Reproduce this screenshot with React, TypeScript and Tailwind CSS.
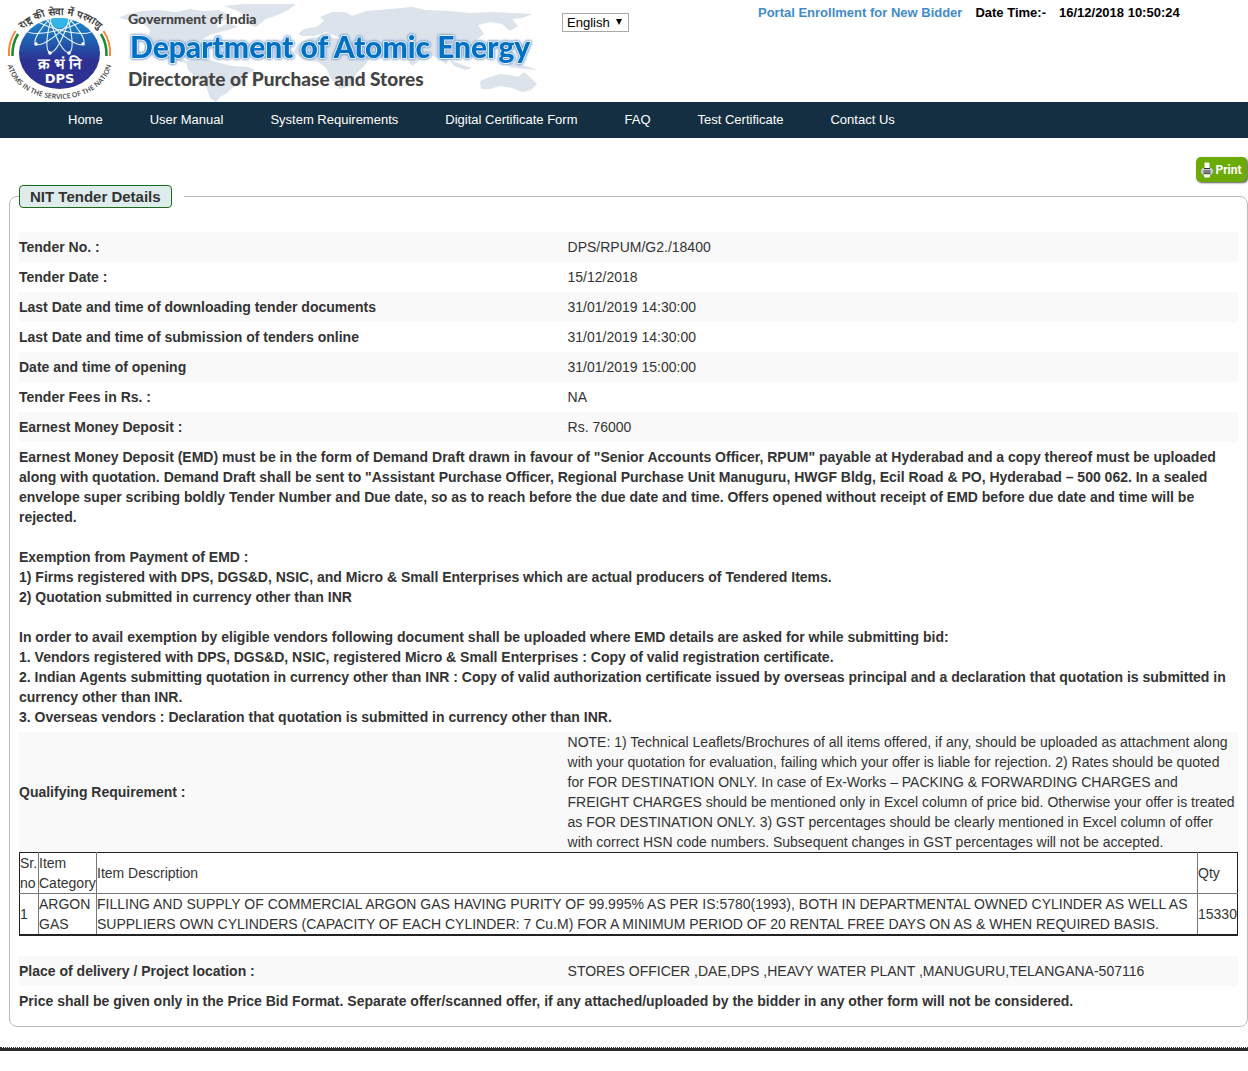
import type { ReactNode } from 'react'

const navItems = [
  'Home',
  'User Manual',
  'System Requirements',
  'Digital Certificate Form',
  'FAQ',
  'Test Certificate',
  'Contact Us',
]

const details = [
  { label: 'Tender No. :', value: 'DPS/RPUM/G2./18400' },
  { label: 'Tender Date :', value: '15/12/2018' },
  { label: 'Last Date and time of downloading tender documents', value: '31/01/2019 14:30:00' },
  { label: 'Last Date and time of submission of tenders online', value: '31/01/2019 14:30:00' },
  { label: 'Date and time of opening', value: '31/01/2019 15:00:00' },
  { label: 'Tender Fees in Rs. :', value: 'NA' },
  { label: 'Earnest Money Deposit :', value: 'Rs. 76000' },
]

const items = [
  {
    no: 1,
    category: 'ARGON GAS',
    description:
      'FILLING AND SUPPLY OF COMMERCIAL ARGON GAS HAVING PURITY OF 99.995% AS PER IS:5780(1993), BOTH IN DEPARTMENTAL OWNED CYLINDER AS WELL AS SUPPLIERS OWN CYLINDERS (CAPACITY OF EACH CYLINDER: 7 Cu.M) FOR A MINIMUM PERIOD OF 20 RENTAL FREE DAYS ON AS & WHEN REQUIRED BASIS.',
    qty: 15330,
  },
]

function Emblem() {
  return (
    <svg width="120" height="102" viewBox="0 0 120 102" role="img" aria-label="DPS emblem">
      <defs>
        <linearGradient id="disc" x1="0" y1="0" x2="0" y2="1">
          <stop offset="0" stopColor="#1a86cc" />
          <stop offset="0.3" stopColor="#1f62b4" />
          <stop offset="0.6" stopColor="#2d3192" />
          <stop offset="1" stopColor="#2d3192" />
        </linearGradient>
        <clipPath id="discClip">
          <ellipse cx="59.5" cy="53.5" rx="40.5" ry="35.5" />
        </clipPath>
        <path id="topArc" d="M19 33 A56 56 0 0 1 102 33" />
        <path id="bottomArc" d="M7 59 A52.5 40 0 0 0 112 59" />
      </defs>
      <ellipse cx="59.5" cy="53.5" rx="40.5" ry="35.5" fill="url(#disc)" />
      <g clipPath="url(#discClip)" fill="none" stroke="#e6f4fc" strokeWidth="1.1">
        <ellipse cx="59.5" cy="21" rx="8.5" ry="33" transform="rotate(17 59.5 21)" />
        <ellipse cx="59.5" cy="21" rx="8.5" ry="33" transform="rotate(-17 59.5 21)" />
        <ellipse cx="59.5" cy="21" rx="8.5" ry="33" transform="rotate(46 59.5 21)" />
        <ellipse cx="59.5" cy="21" rx="8.5" ry="33" transform="rotate(-46 59.5 21)" />
        <ellipse cx="59.5" cy="21" rx="8.5" ry="34" transform="rotate(74 59.5 21)" />
        <ellipse cx="59.5" cy="21" rx="8.5" ry="34" transform="rotate(-74 59.5 21)" />
        <circle cx="59.5" cy="20" r="8.5" fill="#35b4ea" stroke="none" />
      </g>
      <g fill="#fff">
        <circle cx="50" cy="53" r="1.8" />
        <circle cx="69" cy="53" r="1.8" />
        <circle cx="36" cy="44" r="1.8" />
        <circle cx="83" cy="44" r="1.8" />
      </g>
      <g fill="none">
        <path d="M15.5 31 Q8 42 9 56" stroke="#f58a3c" strokeWidth="2" />
        <path d="M18 34 Q12 44 12.5 56" stroke="#1a8a34" strokeWidth="2.5" />
        <path d="M103.5 31 Q111 42 110 56" stroke="#f58a3c" strokeWidth="2" />
        <path d="M101 34 Q107 44 106.5 56" stroke="#1a8a34" strokeWidth="2.5" />
      </g>
      <text x="59.5" y="69" textAnchor="middle" fontSize="15" fontWeight="700" fill="#fff">
        क्र भं नि
      </text>
      <text x="59.5" y="83" textAnchor="middle" fontSize="13" fontWeight="700" fill="#fff" className="font-['DejaVu_Sans',sans-serif]">
        DPS
      </text>
      <text fontSize="10" fontWeight="600" fill="#444">
        <textPath href="#topArc" startOffset="50%" textAnchor="middle">राष्ट्र की सेवा में परमाणु</textPath>
      </text>
      <text fontSize="7" fontWeight="600" fill="#444" className="font-['Open_Sans',sans-serif]">
        <textPath href="#bottomArc" startOffset="50%" textAnchor="middle">ATOMS IN THE SERVICE OF THE NATION</textPath>
      </text>
    </svg>
  )
}

function Banner() {
  return (
    <svg width="430" height="102" viewBox="0 0 430 102" className="font-['Lato',sans-serif]">
      {/* world map */}
      <g fill="#dde3eb">
        <path d="M0 17 L8 14 L22 11 L38 10 L56 12 L70 9 L84 11 L98 10 L110 15 L106 20 L96 22 L98 28 L108 23 L118 27 L104 31 L92 34 L84 38 L76 44 L72 50 L62 49 L58 54 L64 60 L70 63 L60 62 L50 56 L40 52 L34 44 L28 38 L30 30 L22 22 L8 20 L0 18 Z" />
        <path d="M104 6 L122 4 L146 4 L176 4 L168 10 L158 15 L146 19 L136 27 L128 24 L126 16 L118 11 Z" />
        <path d="M66 62 L76 59 L90 60 L100 63 L112 66 L128 67 L135 70 L126 76 L122 84 L112 88 L106 94 L100 97 L96 102 L90 98 L86 86 L76 78 L68 70 Z" />
        <path d="M178 44 L190 38 L206 36 L222 40 L238 42 L246 52 L252 56 L244 66 L236 74 L230 86 L220 89 L212 80 L206 68 L198 62 L184 60 L174 52 Z" />
        <path d="M178 34 L184 29 L196 27 L204 21 L200 17 L212 12 L226 12 L232 16 L246 11 L270 9 L292 7 L306 10 L330 11 L350 13 L372 12 L396 13 L413 14 L402 18 L392 19 L398 26 L390 31 L382 24 L370 22 L358 25 L364 34 L354 42 L346 44 L350 52 L340 58 L332 54 L326 64 L318 58 L308 54 L300 60 L292 66 L284 54 L270 50 L262 58 L250 56 L240 44 L228 40 L216 36 L206 32 L194 36 L182 36 Z" />
        <path d="M330 60 L340 64 L352 68 L346 70 L334 66 Z" />
        <path d="M384 62 L400 64 L418 70 L404 69 L390 67 Z" />
        <path d="M360 81 L370 77 L380 74 L390 75 L398 77 L404 72 L412 79 L417 84 L411 90 L402 92 L392 88 L380 86 L370 89 L361 89 Z" />
      </g>
      <text x="8" y="24" fontSize="14" fontWeight="900" fill="#444">
        Government of India
      </text>
      <text
        x="10"
        y="58"
        fontSize="30"
        fontWeight="900"
        fill="#0070c4"
        stroke="#e4f0fb"
        strokeWidth="2"
        strokeLinejoin="round"
        paintOrder="stroke"
        className="[filter:drop-shadow(0_0_1px_#5f8ccc)_drop-shadow(0_0_1px_#8fb0dc)]"
      >
        Department of Atomic Energy
      </text>
      <text x="8" y="86" fontSize="19" fontWeight="900" fill="#444">
        Directorate of Purchase and Stores
      </text>
    </svg>
  )
}

function PrinterIcon() {
  return (
    <svg width="12" height="16" viewBox="0 0 12 16">
      <path d="M3.500 0.500h4l1 1V6h-5z" fill="#fff" />
      <path d="M1.500 6h9l1.500 2v3l-1.500 1.500h-9L0 11V8z" fill="#c4ccd1" />
      <path d="M3 6.500h6M2.500 9h7M2.500 11.200h7" stroke="#333" strokeWidth="1.200" />
      <path d="M2.500 12.500h7l-1 3h-5z" fill="#fff" />
    </svg>
  )
}

function LanguageSelect() {
  return (
    <div className="relative mt-[13px] ml-3">
      <select
        aria-label="Language"
        className="block h-[19px] w-[67px] appearance-none border border-[#a9a9a9] bg-white pl-1 text-[13px] leading-4 text-black"
      >
        <option>English</option>
      </select>
      <svg width="6" height="6" viewBox="0 0 6 6" className="pointer-events-none absolute top-[6px] right-[7px]">
        <path d="M0 0h6L3 6z" fill="#000" />
      </svg>
    </div>
  )
}

function DetailRow({ label, shaded, children }: { label: string; shaded: boolean; children: ReactNode }) {
  return (
    <div className={`flex items-center ${shaded ? 'bg-[#f9f9f9]' : ''}`}>
      <dt className="w-[45%] shrink-0 font-bold">{label}</dt>
      <dd className="w-[55%]">{children}</dd>
    </div>
  )
}

export default function App() {
  return (
    <div className="bg-white font-['Liberation_Sans',Arial,sans-serif] text-sm leading-5 text-[#333]">
      <header className="flex items-start">
        <Emblem />
        <Banner />
        <LanguageSelect />
        <div className="mt-[3px] ml-[129px] flex gap-[13px] text-[13px] font-bold whitespace-nowrap text-black">
          <a href="#enroll" className="text-[#428bca]">
            Portal Enrollment for New Bidder
          </a>
          <span>Date Time:-</span>
          <time>16/12/2018 10:50:24</time>
        </div>
      </header>

      <nav className="flex h-9 items-center gap-[47px] bg-[#152f42] px-[68px] text-[13px] text-white">
        {navItems.map((item) => (
          <a key={item} href="#">
            {item}
          </a>
        ))}
      </nav>

      <main>
        <div className="flex justify-end pt-[19px] pr-px">
          <button
            type="button"
            className="flex h-[25px] w-[51px] items-center justify-center gap-[2px] rounded-[5px] bg-[#6aab05] font-['Roboto',sans-serif] text-xs font-bold text-white shadow-[1px_1px_2px_#555]"
          >
            <PrinterIcon />
            Print
          </button>
        </div>

        <fieldset className="mt-[3px] ml-[9px] rounded-lg border border-[#bbb] px-[9px] pb-[10px]">
          <legend className="pr-3">
            <span className="block rounded border border-[#1c6b1c] bg-[#deecec] px-[10px] text-[15px] leading-[21px] font-bold">
              NIT Tender Details
            </span>
          </legend>

          <dl className="mt-6">
            {details.map((d, i) => (
              <DetailRow key={d.label} label={d.label} shaded={i % 2 === 0}>
                <div className="py-[5px]">{d.value}</div>
              </DetailRow>
            ))}
          </dl>

          <div className="space-y-5 py-[5px] font-bold">
            <p>
              Earnest Money Deposit (EMD) must be in the form of Demand Draft drawn in favour of "Senior Accounts
              Officer, RPUM" payable at Hyderabad and a copy thereof must be uploaded along with quotation. Demand Draft
              shall be sent to "Assistant Purchase Officer, Regional Purchase Unit Manuguru, HWGF Bldg, Ecil Road & PO,
              Hyderabad – 500 062. In a sealed envelope super scribing boldly Tender Number and Due date, so as to reach
              before the due date and time. Offers opened without receipt of EMD before due date and time will be
              rejected.
            </p>
            <p>
              Exemption from Payment of EMD :<br />
              1) Firms registered with DPS, DGS&D, NSIC, and Micro & Small Enterprises which are actual producers of
              Tendered Items.
              <br />
              2) Quotation submitted in currency other than INR
            </p>
            <p>
              In order to avail exemption by eligible vendors following document shall be uploaded where EMD details are
              asked for while submitting bid:
              <br />
              1. Vendors registered with DPS, DGS&D, NSIC, registered Micro & Small Enterprises : Copy of valid
              registration certificate.
              <br />
              2. Indian Agents submitting quotation in currency other than INR : Copy of valid authorization certificate
              issued by overseas principal and a declaration that quotation is submitted in currency other than INR.
              <br />
              3. Overseas vendors : Declaration that quotation is submitted in currency other than INR.
            </p>
          </div>

          <dl>
            <DetailRow label="Qualifying Requirement :" shaded>
              NOTE: 1) Technical Leaflets/Brochures of all items offered, if any, should be uploaded as attachment along
              with your quotation for evaluation, failing which your offer is liable for rejection. 2) Rates should be
              quoted for FOR DESTINATION ONLY. In case of Ex-Works – PACKING & FORWARDING CHARGES and FREIGHT CHARGES
              should be mentioned only in Excel column of price bid. Otherwise your offer is treated as FOR DESTINATION
              ONLY. 3) GST percentages should be clearly mentioned in Excel column of offer with correct HSN code
              numbers. Subsequent changes in GST percentages will not be accepted.
            </DetailRow>
          </dl>

          <table className="w-full border-collapse border border-b-2 border-[#222] text-left">
            <thead>
              <tr className="border-b border-[#777]">
                <th className="w-[19px] border-r border-[#777] font-normal">Sr. no</th>
                <th className="w-[58px] border-r border-[#777] font-normal">Item Category</th>
                <th className="border-r border-[#777] font-normal">Item Description</th>
                <th className="w-10 font-normal">Qty</th>
              </tr>
            </thead>
            <tbody>
              {items.map((item) => (
                <tr key={item.no}>
                  <td className="border-r border-[#777]">{item.no}</td>
                  <td className="border-r border-[#777]">{item.category}</td>
                  <td className="border-r border-[#777]">{item.description}</td>
                  <td>{item.qty}</td>
                </tr>
              ))}
            </tbody>
          </table>

          <dl className="mt-5">
            <DetailRow label="Place of delivery / Project location :" shaded>
              <div className="py-[5px]">STORES OFFICER ,DAE,DPS ,HEAVY WATER PLANT ,MANUGURU,TELANGANA-507116</div>
            </DetailRow>
          </dl>
          <p className="py-[5px] font-bold">
            Price shall be given only in the Price Bid Format. Separate offer/scanned offer, if any attached/uploaded by
            the bidder in any other form will not be considered.
          </p>
        </fieldset>
      </main>

      <footer className="mt-5 mb-5 h-1 border-t border-dotted border-[#2b2b2b] bg-[#2b2b2b] bg-clip-padding" />
    </div>
  )
}
